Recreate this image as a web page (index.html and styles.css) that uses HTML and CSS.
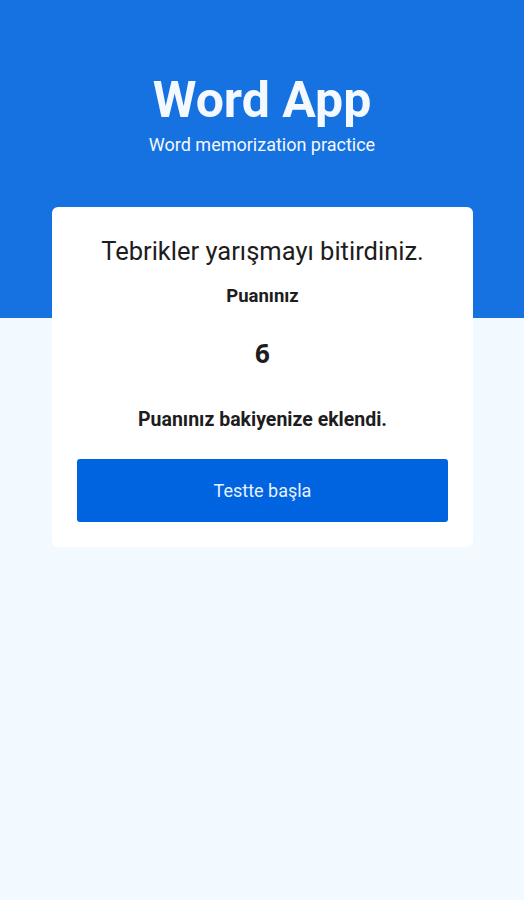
FILE: index.html
```html
<!DOCTYPE html>
<html lang="tr">
<head>
<meta charset="utf-8">
<link rel="stylesheet" href="styles.css">
</head>
<body>
<div class="page">
  <header class="hero">
    <h1 class="title">Word App</h1>
    <p class="subtitle">Word memorization practice</p>
  </header>
  <main class="content">
    <section class="card">
      <p class="congrats">Tebrikler yarışmayı bitirdiniz.</p>
      <p class="label">Puanınız</p>
      <p class="score">6</p>
      <p class="note">Puanınız bakiyenize eklendi.</p>
      <button class="btn">Testte başla</button>
    </section>
  </main>
</div>
</body>
</html>
```
FILE: styles.css
```css
* { box-sizing: border-box; }
html, body { margin: 0; padding: 0; }
body {
  font-family: Roboto, "Noto Sans", sans-serif;
  background: #f3faff;
  width: 524px;
  height: 900px;
  overflow: hidden;
}
.page { position: relative; }
.hero {
  background: #1672e0;
  height: 318px;
  padding-top: 70px;
  text-align: center;
  color: #f4f8ff;
}
.title {
  margin: 0;
  font-size: 50px;
  font-weight: 700;
  line-height: 60px;
}
.subtitle {
  margin: 4px 0 0;
  font-size: 18px;
  line-height: 22px;
}
.content {
  margin-top: -111px;
  padding: 0 51px 0 52px;
}
.card {
  background: #fff;
  border-radius: 6px;
  padding: 29px 25px 25px;
  text-align: center;
  color: #1d1d1d;
}
.card p { margin: 0; }
.congrats {
  font-size: 25.5px;
  line-height: 30px;
}
.label {
  margin-top: 19px !important;
  font-size: 18.5px;
  font-weight: 700;
  line-height: 22px;
}
.score {
  margin-top: 30px !important;
  font-family: "Noto Sans", Roboto, sans-serif;
  font-size: 26px;
  font-weight: 700;
  line-height: 32px;
}
.note {
  margin-top: 39px !important;
  font-size: 19.5px;
  font-weight: 700;
  line-height: 24px;
}
.btn {
  display: block;
  width: 100%;
  margin-top: 27px;
  height: 63px;
  border: none;
  border-radius: 3px;
  background: #0064e1;
  color: #e8f0ff;
  font-family: inherit;
  font-size: 18px;
}
```
